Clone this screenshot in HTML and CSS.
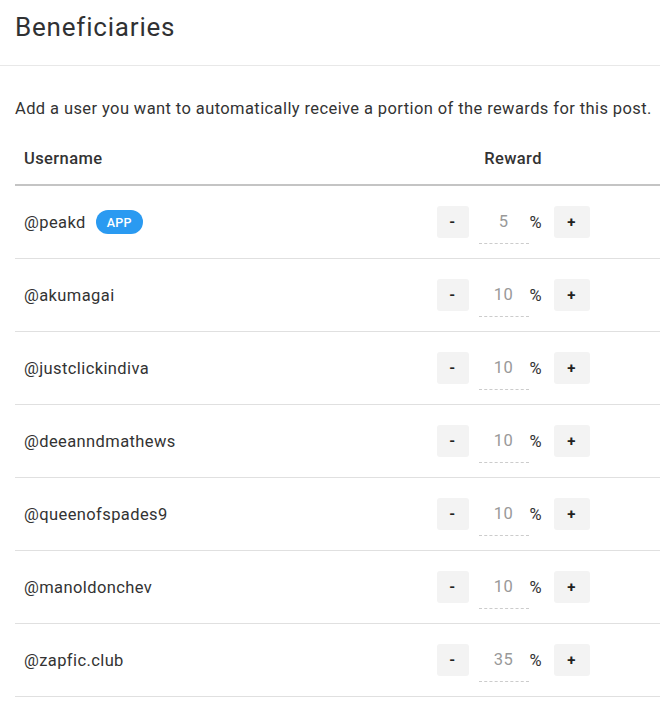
FILE: index.html
```html
<!DOCTYPE html>
<html>
<head>
<meta charset="utf-8">
<link rel="stylesheet" href="styles.css">
</head>
<body>
<div class="modal">
  <div class="modal-header"><h1 class="title">Beneficiaries</h1></div>
  <div class="modal-body">
    <p class="desc">Add a user you want to automatically receive a portion of the rewards for this post.</p>
    <div class="table">
      <div class="row head">
        <div class="cell user">Username</div>
        <div class="cell reward">Reward</div>
      </div>
      <div class="row">
        <div class="cell user">@peakd <span class="badge">APP</span></div>
        <div class="cell reward"><span class="btn">-</span><span class="num">5</span><span class="pct">%</span><span class="btn plus">+</span></div>
      </div>
      <div class="row">
        <div class="cell user">@akumagai</div>
        <div class="cell reward"><span class="btn">-</span><span class="num">10</span><span class="pct">%</span><span class="btn plus">+</span></div>
      </div>
      <div class="row">
        <div class="cell user">@justclickindiva</div>
        <div class="cell reward"><span class="btn">-</span><span class="num">10</span><span class="pct">%</span><span class="btn plus">+</span></div>
      </div>
      <div class="row">
        <div class="cell user">@deeanndmathews</div>
        <div class="cell reward"><span class="btn">-</span><span class="num">10</span><span class="pct">%</span><span class="btn plus">+</span></div>
      </div>
      <div class="row">
        <div class="cell user">@queenofspades9</div>
        <div class="cell reward"><span class="btn">-</span><span class="num">10</span><span class="pct">%</span><span class="btn plus">+</span></div>
      </div>
      <div class="row">
        <div class="cell user">@manoldonchev</div>
        <div class="cell reward"><span class="btn">-</span><span class="num">10</span><span class="pct">%</span><span class="btn plus">+</span></div>
      </div>
      <div class="row">
        <div class="cell user">@zapfic.club</div>
        <div class="cell reward"><span class="btn">-</span><span class="num">35</span><span class="pct">%</span><span class="btn plus">+</span></div>
      </div>
    </div>
  </div>
</div>
</body>
</html>
```
FILE: styles.css
```css
html, body {
  margin: 0;
  padding: 0;
  background: #fff;
}
body {
  font-family: Roboto, "Liberation Sans", sans-serif;
  color: #333;
  overflow: hidden;
  letter-spacing: 0.4px;
}
.modal {
  width: 660px;
}
.modal-header {
  height: 66px;
  border-bottom: 1px solid #e8e8e8;
  padding: 0 15px;
  box-sizing: border-box;
  display: flex;
  align-items: center;
}
.title {
  margin: 0;
  font-size: 26px;
  letter-spacing: 0.8px;
  font-weight: 400;
  color: #303133;
  line-height: 1;
  position: relative;
  top: -6px;
}
.modal-body {
  padding: 0 0 0 15px;
}
.desc {
  margin: 0;
  padding-top: 33px;
  font-size: 16.5px;
  line-height: 20px;
  color: #333;
}
.table {
  margin-top: 14px;
  width: 645px;
}
.row {
  display: flex;
  align-items: center;
  height: 73px;
  border-bottom: 1px solid #e0e0e0;
  box-sizing: border-box;
}
.row.head {
  height: 53px;
  border-bottom: 2px solid #c4c4c4;
  font-weight: 500;
  font-size: 16.5px;
}
.cell.user {
  flex: 1;
  padding-left: 9px;
  font-size: 16.5px;
  display: flex;
  align-items: center;
}
.cell.reward {
  width: 294px;
  display: flex;
  align-items: center;
  justify-content: center;
  font-size: 16.5px;
}
.badge {
  display: inline-flex;
  align-items: center;
  justify-content: center;
  width: 47px;
  height: 24px;
  margin-left: 10px;
  border-radius: 12px;
  background: #2a9af1;
  color: #fff;
  font-size: 12.5px;
  font-weight: 500;
  letter-spacing: 0.3px;
}
.btn {
  width: 32px;
  height: 32px;
  background: #f3f3f3;
  border-radius: 3px;
  display: flex;
  align-items: center;
  justify-content: center;
  font-size: 15px;
  font-weight: 700;
  color: #222;
}
.btn.plus {
  width: 36px;
}
.num {
  width: 50px;
  height: 44px;
  margin-left: 10px;
  box-sizing: border-box;
  border-bottom: 1px dashed #ccc;
  display: flex;
  align-items: center;
  justify-content: center;
  color: #999;
  font-size: 16.5px;
}
.pct {
  width: 14px;
  margin: 0 10px 0 1px;
  color: #333;
  font-size: 16.5px;
}
```
